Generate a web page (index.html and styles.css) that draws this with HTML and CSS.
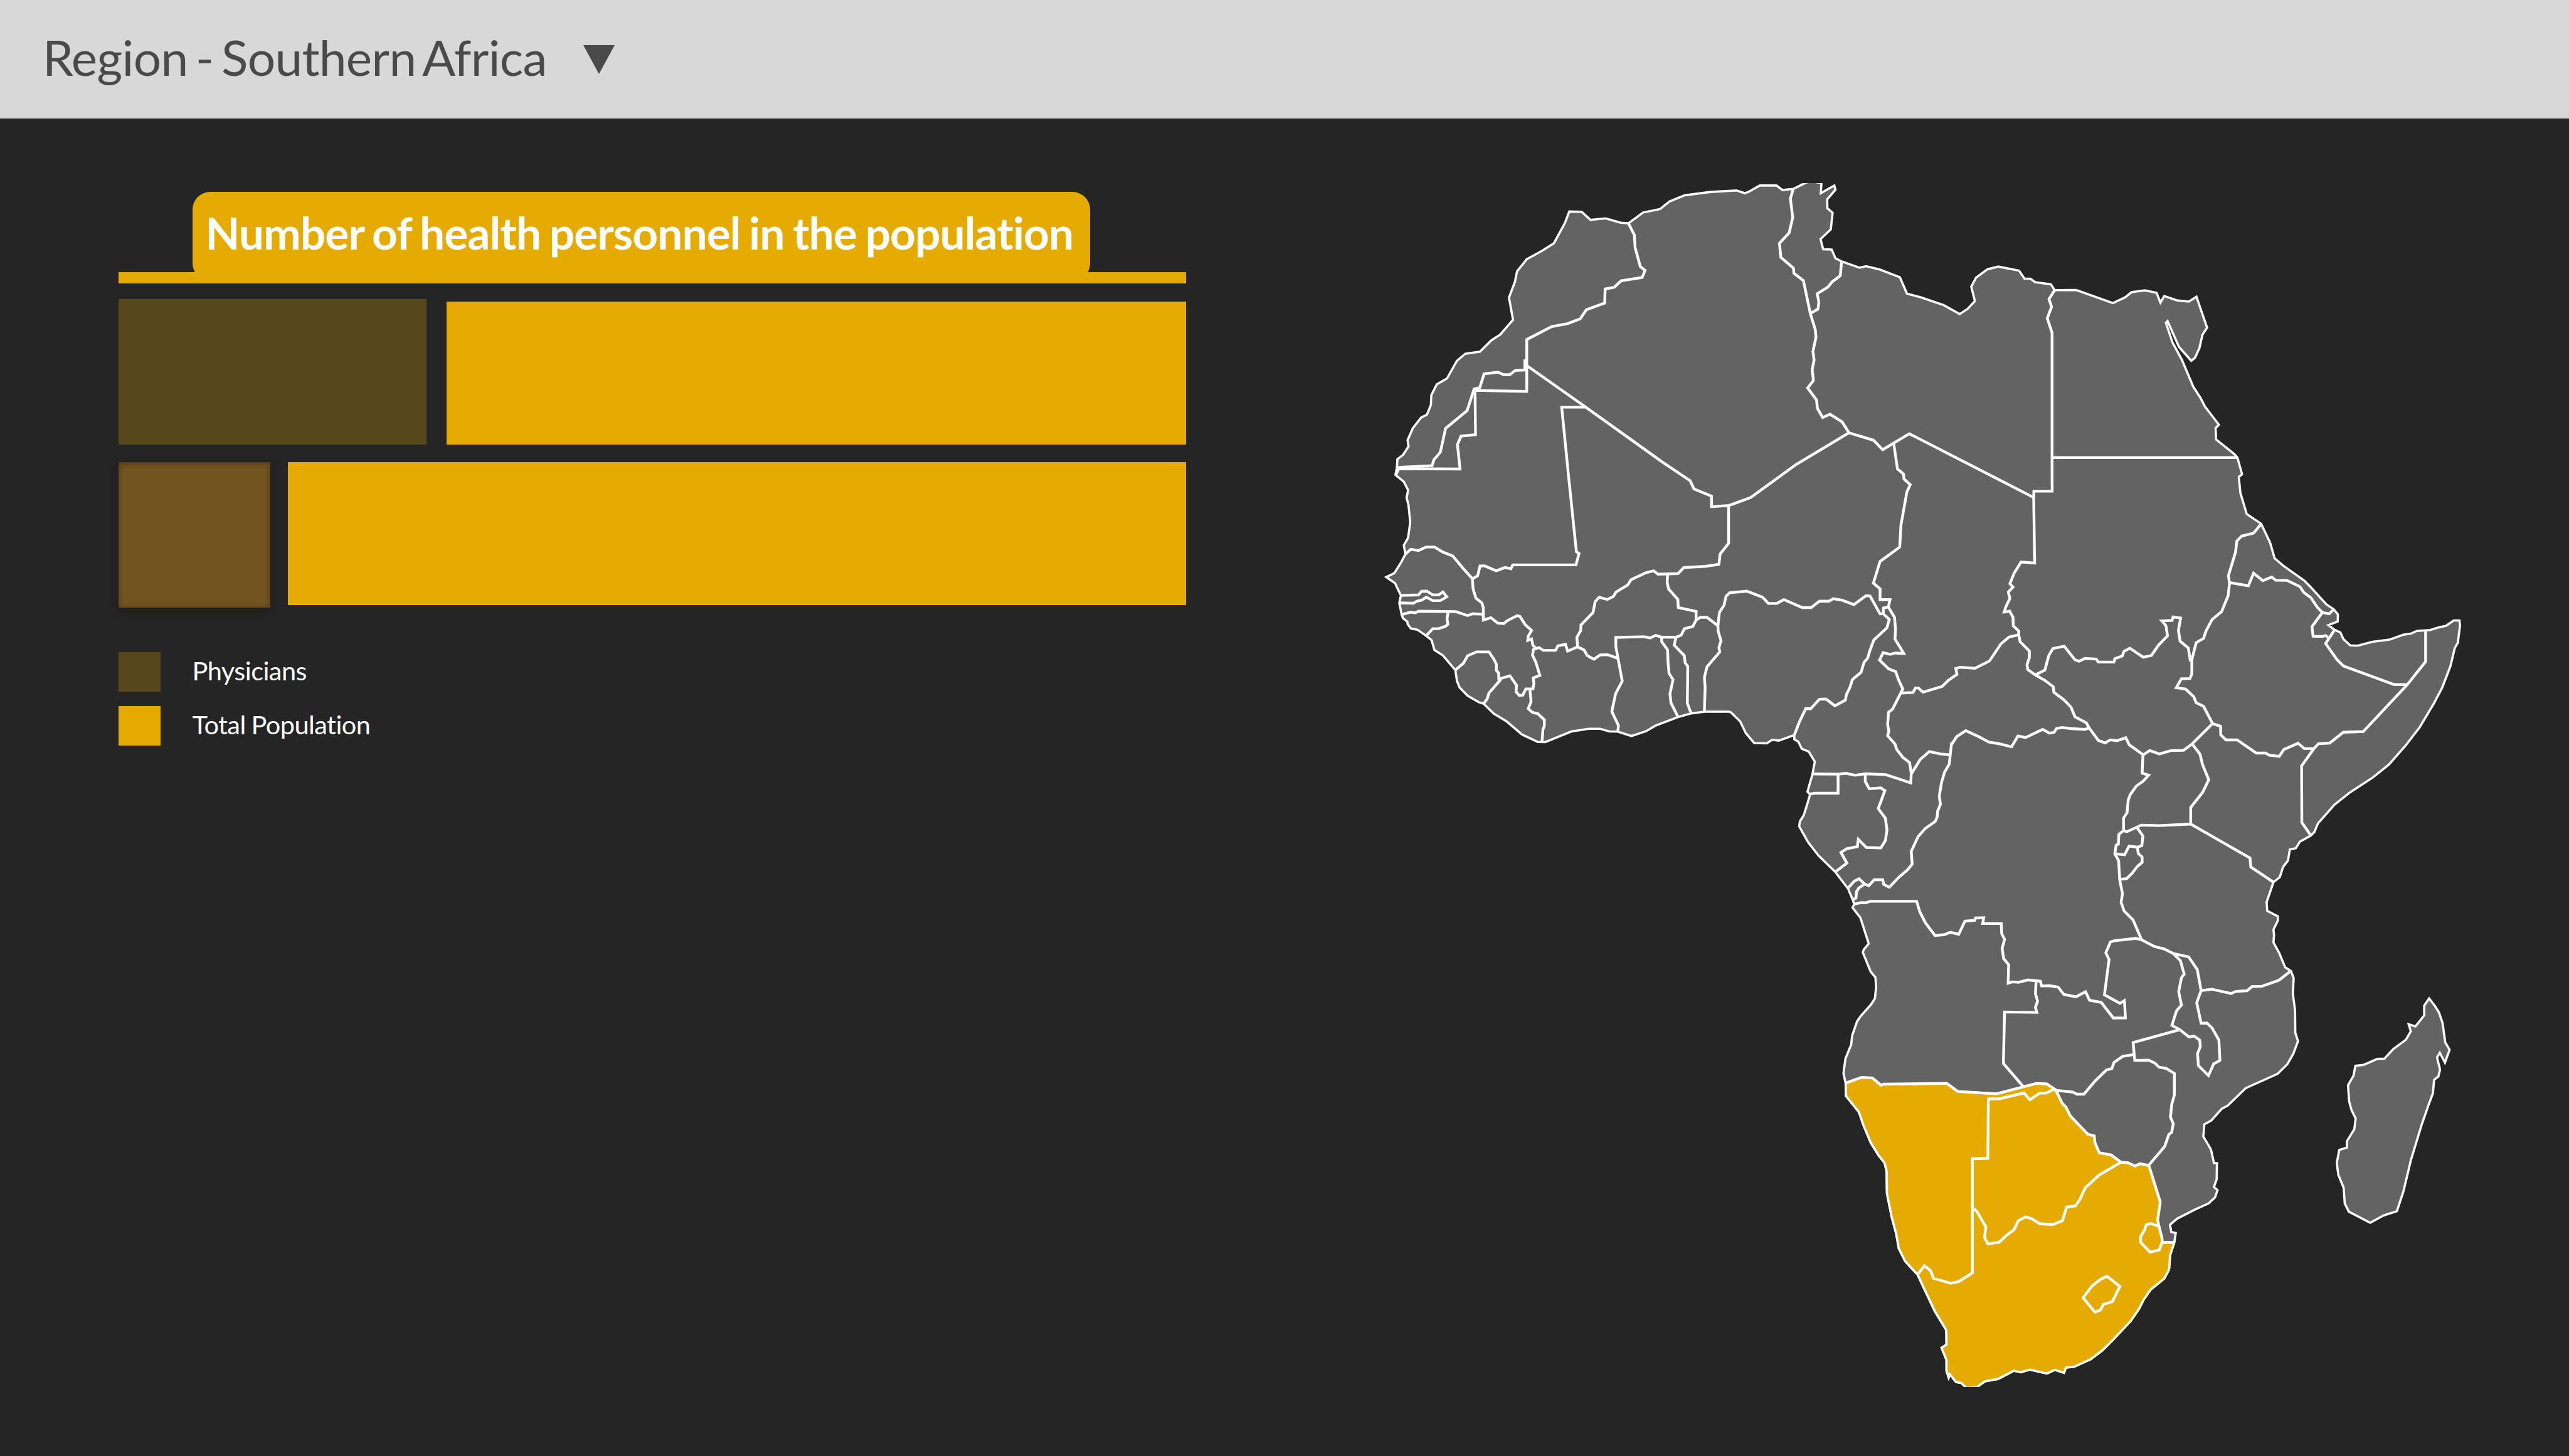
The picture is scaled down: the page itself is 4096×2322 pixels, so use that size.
FILE: index.html
```html
<!DOCTYPE html>
<html lang="en">
<head>
<meta charset="utf-8">
<title>Region - Southern Africa</title>
<link rel="stylesheet" href="styles.css">
</head>
<body>
<header class="topbar">
  <h1 class="region-name">Region - Southern Africa</h1>
  <svg class="caret" viewBox="0 0 50 46"><polygon points="0,0 50,0 25,46"/></svg>
</header>
<main class="content">
  <section class="stats">
    <h2 class="stats-title">Number of health personnel in the population</h2>
    <div class="rule"></div>
    <div class="bar-row bar-row-first">
      <div class="bar bar-physicians"></div>
      <div class="bar bar-population"></div>
    </div>
    <div class="bar-row bar-row-second">
      <div class="bar bar-selected"></div>
      <div class="bar bar-population"></div>
    </div>
    <ul class="legend">
      <li class="legend-item"><span class="swatch swatch-physicians"></span><span class="legend-label">Physicians</span></li>
      <li class="legend-item"><span class="swatch swatch-population"></span><span class="legend-label">Total Population</span></li>
    </ul>
  </section>
  <svg class="map" id="map" viewBox="3474 492 3150 3234"></svg>
</main>
<script src="map.js"></script>
</body>
</html>
```
FILE: styles.css
```css
* { box-sizing: border-box; }

body {
  margin: 0;
  width: 4096px;
  height: 2322px;
  overflow: hidden;
  display: flex;
  flex-direction: column;
  background: #252525;
  color: #fff;
  font-family: Lato, "Liberation Sans", sans-serif;
}

.topbar {
  height: 189px;
  flex: none;
  display: flex;
  align-items: center;
  gap: 58.5px;
  padding-left: 68px;
  background: #d8d8d8;
  color: #4a4a4a;
}

.region-name {
  margin: 0;
  padding-bottom: 8px;
  font-size: 78.4px;
  font-weight: 400;
  line-height: 94px;
  letter-spacing: -.7px;
  word-spacing: -6.8px;
  white-space: nowrap;
}

.caret { width: 50px; height: 46px; fill: #4a4a4a; }

.content {
  flex: 1;
  display: flex;
  justify-content: space-between;
  padding: 103px 164px 0 189px;
}

.stats {
  width: 1702px;
  padding-top: 14px;
  display: flex;
  flex-direction: column;
}

.stats-title {
  width: 1431px;
  height: 142px;
  margin: 0 0 -14px 117.5px;
  padding: 22px 0 0 21px;
  border-radius: 28px;
  background: #e5ab02;
  font-size: 71.3px;
  font-weight: 700;
  line-height: 86px;
  letter-spacing: -.95px;
  word-spacing: -2.9px;
  white-space: nowrap;
}

.rule { height: 18px; background: #e5ab02; }

.bar-row { display: flex; }
.bar-row-first { height: 232px; margin-top: 25px; gap: 32px; align-items: flex-end; }
.bar-row-second { height: 232px; margin-top: 28px; gap: 28px; align-items: flex-start; }

.bar { height: 228px; }
.bar-population { flex: 1; background: #e5ab02; }
.bar-physicians { width: 491px; height: 232px; background: #56471c; }
.bar-selected {
  width: 242px;
  height: 232px;
  background: #73531f;
  box-shadow: 0 5px 14px rgba(0, 0, 0, .25), inset 0 2px 10px rgba(0, 0, 0, .35);
}

.legend {
  list-style: none;
  margin: 71px 0 0;
  padding: 0;
  display: flex;
  flex-direction: column;
  gap: 23px;
}
.legend-item { display: flex; align-items: center; gap: 50.5px; height: 63px; }
.swatch { width: 67px; height: 63px; }
.swatch-physicians { background: #56471c; }
.swatch-population { background: #e5ab02; }
.legend-label {
  padding-bottom: 5px;
  font-size: 41.5px;
  line-height: 50px;
  letter-spacing: -.55px;
  word-spacing: -1.2px;
}

.map { width: 1870px; height: 1920px; flex: none; overflow: hidden; }
.land { fill: #636363; stroke: #fff; stroke-width: 6; }
.highlight { fill: #e5ab02; stroke: #fff; stroke-width: 6; }
.border { fill: none; stroke: #fff; stroke-width: 7.4; }
```
FILE: map.js
```js
// The map is digitised in overlapping sheets. Each sheet has its own
// 1568-unit grid, given here as [left, top, width, height] on the full map.
const SHEETS = {
  A: [3700, 480, 1000, 800],
  B: [4700, 480, 1000, 800],
  C: [5500, 680, 1150, 900],
  D: [3700, 1240, 1000, 800],
  E: [4650, 1240, 1000, 800],
  F: [5500, 1560, 1150, 900],
  G: [4700, 2000, 1000, 900],
  H: [5500, 2440, 1150, 900],
  I: [4900, 2850, 1000, 900],
};

const SOUTH_COAST = 'I 1474 850 1457 908 1452 977 1432 1018 1375 1070 1346 1116 1325 1162 1290 1218 1214 1308 1172 1354 1122 1396 1053 1431 1018 1435 1010 1460 971 1446 938 1463 866 1445 827 1457 799 1450 733 1488 676 1500 643 1527 600 1532 577 1507 555 1503 529 1466 524 1482 515 1451 515 1400 494 1343 515 1328 514 1260 465 1170 393 1000 341 938 314 878 303 808 284 730 264 620 263 518 254 477 230 444 196 383 165 300 146 239 92 165 90 104';

const LAND = [
  // mainland
  `A 76 1558 82 1522 84 1477 108 1454 131 1410 127 1376 149 1314 184 1258 208 1243 225 1192 227 1140 250 1083 293 1052 335 959 370 922 432 911 480 851 517 821 571 743 554 626 579 543 588 488 629 424 693 380 743 340 789 235 808 173 860 174 897 217 961 209 1025 232 1057 235 1119 178 1190 160 1230 120 1293 88 1403 70 1513 62 1548 77
   B 0 66 42 36 113 36 138 60 183 54 235 22 262 12 285 20 302 22 299 76 356 36 361 58 326 109 327 156 349 180 341 267 298 318 309 372 345 373 361 419 387 436 462 469 490 461 547 478 632 519 662 605 721 625 817 666 884 713 917 686 948 645 933 569 953 521 1001 477 1046 463 1134 484 1157 527 1182 527 1202 545 1268 556 1284 587
   C 105 173 239 234 284 207 307 183 356 174 399 186 413 232 427 201 473 221 517 227 545 204 565 279 584 349 567 382 556 444 540 489 526 504 481 439 439 318 433 326 457 418 492 500 534 627 560 678 576 718 627 803 615 819 617 872 684 941 695 957 712 1035 700 1048 706 1123 729 1221 782 1267 815 1356 831 1428 862 1462 941 1534
   F 967 35 1021 111 1048 134 1063 158 1062 191 1028 208 1051 230 1072 242 1083 273 1108 303 1135 304 1190 286 1252 276 1302 253 1330 248 1352 235 1401 231 1430 219 1459 211 1487 186 1508 186 1510 210 1502 291 1491 315 1475 400 1445 500 1415 573 1363 685 1310 773 1250 860 1191 921 1108 990 1051 1048 990 1136 977 1176 964 1193 924 1221 909 1252 887 1258 880 1310 862 1340 850 1388 827 1411 802 1504 804 1545
   H 843 38 843 58 827 100 829 125 827 160 848 209 870 277 891 293 901 327 898 400 906 477 907 583 917 622 900 680 878 730 842 775 725 842 660 923 638 938 599 994 574 1011 570 1068 598 1129 609 1192 620 1192 619 1268 609 1304 622 1319 613 1353 590 1381 540 1410 474 1453 448 1481 453 1515 469 1520
   ${SOUTH_COAST} 81 58
   G 403 1470 427 1405 431 1363 452 1296 468 1270 510 1218 527 1189 532 1134 529 1090 509 1063 476 973 480 960 501 932 466 811 433 764 440 747 434 728 414 675 360 596 290 520 246 458 208 383 211 360 227 332 241 283 254 234 243 221 264 139 274 80 248 33 219 20
   E 283 1475 266 1462 266 1440 200 1469 173 1465 150 1484 97 1482 62 1430 38 1368 0 1322
   D 1483 1317 1377 1317 1321 1326 1266 1345 1170 1391 1131 1420 1070 1445 1012 1422 977 1421 938 1407 890 1407 817 1421 707 1477 675 1476 609 1437 545 1369 490 1327 447 1275 427 1267 380 1233 346 1190 335 1155 328 1098 276 1021 240 992 228 940 205 917 168 885 141 879 127 855 126 843 107 824 102 806 92 743 99 705 74 640 37 608 71 588 100 530 118 487 111 441 129 402 138 320 131 230 123 190 129 150 111 106 76 70`,
  // Madagascar
  'H 1397 422 1379 456 1379 501 1347 553 1322 543 1330 576 1312 615 1265 660 1233 704 1207 705 1157 733 1127 737 1120 784 1100 828 1104 903 1113 945 1128 984 1123 1034 1096 1090 1096 1120 1068 1131 1059 1190 1064 1246 1084 1308 1088 1382 1103 1420 1181 1472 1230 1438 1279 1418 1303 1325 1330 1180 1370 1012 1395 920 1411 865 1415 803 1431 787 1437 755 1426 698 1436 676 1455 722 1472 662 1456 628 1446 536 1433 487 1418 457',
];

// Southern Africa, the selected region
const HIGHLIGHT = [
  `I 90 104 157 77 203 80 239 114 250 109 516 105 562 143 725 154 895 105 938 108 970 132 975 136 1002 198 1018 216 1036 257 1110 343 1137 351 1140 382 1158 430 1208 440 1250 474 1280 477 1309 492 1330 481 1367 489 1415 660 1404 745 1410 775 1422 828 1424 850
   ${SOUTH_COAST}`,
];

const BORDERS = [
  'A 1057 235 1082 297 1085 362 1107 463 1127 483 1115 520 1026 538 997 572 959 581 957 655 880 690 854 738 801 763 734 779 629 847 629 1120 411 1115 413 1348 352 1356 337 1400 348 1529 90 1527 78 1558',
  'A 621 952 621 1008 580 1010 558 1032 530 1032 508 1019 449 1028 431 1100 407 1107 378 1221 287 1315 265 1440 238 1480 230 1511 82 1520',
  'A 629 984 876 1202 D 1197 0 1317 101 1333 144 1407 182 1407 238 1479 231 E 0 227 82 190 B 195 1505 418 1338',
  'A 876 1203 776 1203 805 1568 D 838 475 849 484 836 544 570 544 562 564 537 558 500 575 452 549 432 550 422 602 400 617',
  'B 183 54 171 105 181 204 166 285 125 340 131 414 184 471 186 498 226 537 255 710 276 795 279 835 266 910 271 955 263 1005 268 1063 244 1102 281 1165 285 1210 307 1258 338 1240 389 1281 418 1338 521 1377 560 1427 606 1392 672 1343 E 1274 189',
  'B 387 436 381 511 347 543 329 571 284 606 291 650 287 687 255 710',
  'B 1284 587 1260 634 1271 675 1253 735 1273 812 1273 1568 E 1352 156 1275 156 1274 189 1278 534 1221 529 1192 587 1174 643 1187 661 1167 687 1174 720 1157 764 1150 792 1173 788 1187 820 1188 865 1211 892 1211 912 1217 948 1256 998 1256 1032 1246 1070 1249 1095 1279 1122 1321 1152 1357 1186 1359 1215 1402 1255 1431 1293 1448 1344 1496 1376 1508 1403 F 186 748 211 759 229 745 254 749 286 735 299 768 350 815 374 795 409 811 453 795 498 794 529 764 604 669 633 681 634 722 653 745 694 745 764 807 798 807 812 817 848 822 865 790 917 761 940 786 975 786 992 763 1033 760 1083 709 1156 706 1316 488 1384 379 1384 233',
  'C 18 957 695 957',
  'B 606 1392 622 1528 E 726 66 728 92 754 121 740 160 715 335 710 450 627 526 599 640 627 670 627 727 669 727 662 766 642 771 640 801 627 802 585 708 568 706 517 753 467 730 430 722 412 735 372 735 337 769 300 769 222 727 192 747 157 747 132 714 66 682 D 1483 691 1468 710 1460 755 1440 795 1434 865 1435 895 1447 943 1438 980 1442 1002 1388 1080 1377 1135 1380 1190 1377 1317',
  'E 640 801 666 831 656 876 601 939 583 1000 575 1035 560 1056 547 1110 511 1147 500 1190 486 1225 481 1256 437 1286 399 1250 372 1251 335 1301 314 1301 287 1372 266 1440',
  'E 662 766 688 820 692 880 690 935 727 1010 690 1008 670 1015 640 1006 625 1045 663 1091 693 1106 704 1147 723 1198 714 1219 680 1303 663 1320 659 1385 664 1418 659 1444 690 1487 697 1515 722 1556 G 673 85 680 135 678 180 573 141 487 137 443 144 405 135 372 139 266 138',
  'G 682 135 718 70 756 33 803 44 840 48',
  'E 714 1219 766 1216 776 1192 788 1192 808 1214 888 1184 915 1152 951 1121 946 1090 963 1083 1027 1088 1088 1050 1136 960 1170 924 1211 912',
  'E 1283 1122 1321 1098 1338 1020 1355 984 F 61 307 100 370 115 377 137 364 178 367 186 381 243 381 246 365 273 353 280 330 301 316 350 358 380 350 406 302 439 258 433 210 418 188 456 186 459 170 487 175 479 232 485 283 515 315 523 378',
  'C 782 1267 754 1311 711 1324 693 1347 688 1400 662 1510 666 1545 F 661 70 637 145 602 182 580 235 571 270 544 290 528 370 528 437 521 458 490 459 471 501 505 507 535 543 544 571 571 588 604 669',
  'C 668 1542 735 1557 754 1498 788 1533 821 1516 835 1531 877 1532 F 924 28 938 55 964 80 988 125 1006 149 1031 155 1048 134',
  'F 1006 149 968 215 972 260 1005 261 1018 257 1027 266',
  'F 1051 230 1018 294 1060 370 1083 399 1269 486 1316 486',
  'F 975 786 930 867 931 1132 964 1193',
  'F 529 764 558 812 567 860 590 931 568 990 524 1061 524 1139 741 1298 744 1340 827 1411',
  'F 524 1139 409 1146 343 1144 290 1175 278 1170',
  'F 349 815 346 901 370 910 350 938 325 961 303 1000 295 1026 291 1085 278 1111 278 1170 261 1187 259 1233 251 1237 246 1278 260 1310 264 1400 274 1465 269 1505 280 1546 H 313 55 343 145',
  'F 327 1155 349 1195 345 1240 328 1247 298 1242 282 1283 246 1278',
  'F 328 1247 332 1277 346 1293 346 1318 328 1338 310 1368 290 1394 264 1398',
  'E 1508 1403 1490 1410 1432 1406 1393 1400 1370 1406 1360 1426 1340 1430 1312 1410 1240 1453 1208 1445 1181 1502 1130 1486 1085 1477 1045 1450 988 1417 950 1448 928 1490 G 849 0 840 92 820 130 807 180 798 243 803 280 791 312 789 340 781 360 738 394 709 431 680 500 684 560 665 586 627 622 588 668 564 655 560 633 524 633 501 661 484 653 460 628 440 640 414 672',
  'G 484 653 459 672 450 688 447 719 434 726',
  'G 372 139 372 228 275 228 250 232',
  'G 487 137 486 172 503 207 552 203 569 216 541 300 571 345 578 400 571 450 552 484 491 482 457 444 453 478 408 488 384 505 409 555 360 596',
  'G 440 747 470 740 488 741 507 734 703 734 716 783 740 835 780 894 820 890 844 879 880 888 906 827 947 823 951 812 985 811 981 838 1059 838 1061 885 1073 912 1063 955 1069 1002 1090 1030 1088 1117 1105 1111 1132 1113 1171 1102 1224 1108 1229 1130 1263 1129 1299 1136 1323 1170 1374 1181 1414 1157 1431 1197 1480 1207 1531 1280 H 285 513 281 432 265 445 208 405 225 240 213 208 230 158 245 152 323 141 343 147 391 179 428 191 460 212 516 227 548 287 562 385 546 442 562 538 583 537 602 560 627 617 631 712 608 728 589 783 552 736 549 680 559 648 557 617 536 598 518 603 484 568 455 548 472 480 490 453 480 390 490 325 500 308 486 245 460 212',
  'H 562 385 602 379 672 399 689 389 730 386 749 366 785 365 847 337 891 293',
  'G 1206 1108 1203 1165 1212 1202 1203 1230 1209 1254 1073 1252 1068 1493 I 838 120',
  'H 484 568 313 628 319 712 370 711 394 726 408 744 433 749 464 773 464 875 454 920 450 978 460 1008 454 1049 444 1058 429 1114 370 1203',
  'H 318 684 275 693 243 722 235 750 215 757 174 808 133 870 107 870 92 860 25 852',
  'I 90 104 157 77 203 80 239 114 250 109 516 105 562 143 725 154 895 105 938 108 970 132 935 150 906 152 866 182 841 150 739 177 691 178 689 456 624 458 624 992 566 1033 532 1041 487 1026 460 1018 448 982 422 959 393 1000',
  'I 970 132 975 136 1002 198 1018 216 1036 257 1110 343 1137 351 1140 382 1158 430 1208 440 1250 474 1280 477 1309 492 1330 481 1367 489 1415 660 1404 745 1410 775 1422 828 1424 850 1474 850',
  'I 624 688 642 703 681 778 675 826 689 857 737 849 768 816 800 789 817 748 848 730 875 739 907 762 962 766 1003 748 1021 684 1057 679 1077 648 1099 594 1158 534 1250 474',
  'I 1410 775 1375 761 1356 767 1350 789 1332 823 1333 850 1372 895 1411 885 1422 850',
  'I 1191 1008 1245 1056 1213 1127 1176 1139 1163 1166 1140 1176 1090 1109 1128 1053 1165 1021 1191 1008 1245 1056',
  'D 118 487 140 462 173 468 205 450 240 450 273 475 317 497 362 564 400 617 403 672 415 719 440 744 446 770 446 834 478 822 506 850 532 853 549 836 589 811 600 815 622 858 649 889 635 920 633 942 649 934 655 968 668 984 681 980 698 994 750 994 760 970 792 962 801 998 843 976 870 992 884 1022 912 1041 938 1018 970 1017 1012 1036',
  'D 99 705 173 702 186 683 208 682 233 702 258 702 276 686 292 712 264 732 233 732 206 714 186 730 166 735 152 746 92 744',
  'D 102 806 139 793 160 796 173 788 330 790 380 811 401 801 443 804',
  'D 298 790 293 828 297 857 287 867 258 880 233 880 205 917',
  'D 328 1098 362 1062 380 1022 418 1002 470 1002 490 1040 501 1067 501 1100 510 1112 511 1145 558 1128 586 1178 584 1212 597 1231 612 1230 625 1197 655 1197 659 1170 656 1139 684 1126 667 1056 653 1020 657 990 670 984',
  'D 520 1147 470 1218 462 1250 447 1275',
  'D 642 1197 647 1265 635 1300 653 1321 675 1327 703 1360 703 1392 697 1410 693 1476',
  'D 843 976 840 925 856 890 857 860 908 795 917 738 934 714 968 726 993 711 1005 687 1054 650 1068 622 1131 585 1163 575 1182 593 1266 590 1290 558 1380 552 1438 541 1443 487 1479 430 1479 231',
  'D 1222 594 1220 635 1226 671 1265 726 1267 769 1342 789 1342 835 1328 868 1293 880 1279 914 1257 925 1195 924 1172 915 1148 929 1122 922 1004 926 1004 975 1031 1156 1003 1222 987 1316 1015 1390 1012 1422',
  'D 1342 835 1360 820 1388 820 1434 865',
  'D 1257 925 1250 967 1292 1021 1296 1060 1307 1078 1305 1272 1321 1326',
  'D 1197 926 1197 948 1222 992 1224 1060 1228 1115 1245 1148 1232 1222 1236 1270 1266 1345',
];

function toPoints(line) {
  const tokens = line.trim().split(/\s+/);
  const points = [];
  let sheet;
  for (let i = 0; i < tokens.length;) {
    if (SHEETS[tokens[i]]) {
      sheet = SHEETS[tokens[i]];
      i += 1;
      continue;
    }
    const x = sheet[0] + tokens[i] * sheet[2] / 1568;
    const y = sheet[1] + tokens[i + 1] * sheet[3] / 1568;
    points.push(`${x.toFixed(1)},${y.toFixed(1)}`);
    i += 2;
  }
  return points.join(' ');
}

function draw(lines, tag, className) {
  const map = document.getElementById('map');
  lines.forEach((line) => {
    const shape = document.createElementNS('http://www.w3.org/2000/svg', tag);
    shape.setAttribute('points', toPoints(line));
    shape.setAttribute('class', className);
    map.appendChild(shape);
  });
}

draw(LAND, 'polygon', 'land');
draw(HIGHLIGHT, 'polygon', 'highlight');
draw(BORDERS, 'polyline', 'border');
```
